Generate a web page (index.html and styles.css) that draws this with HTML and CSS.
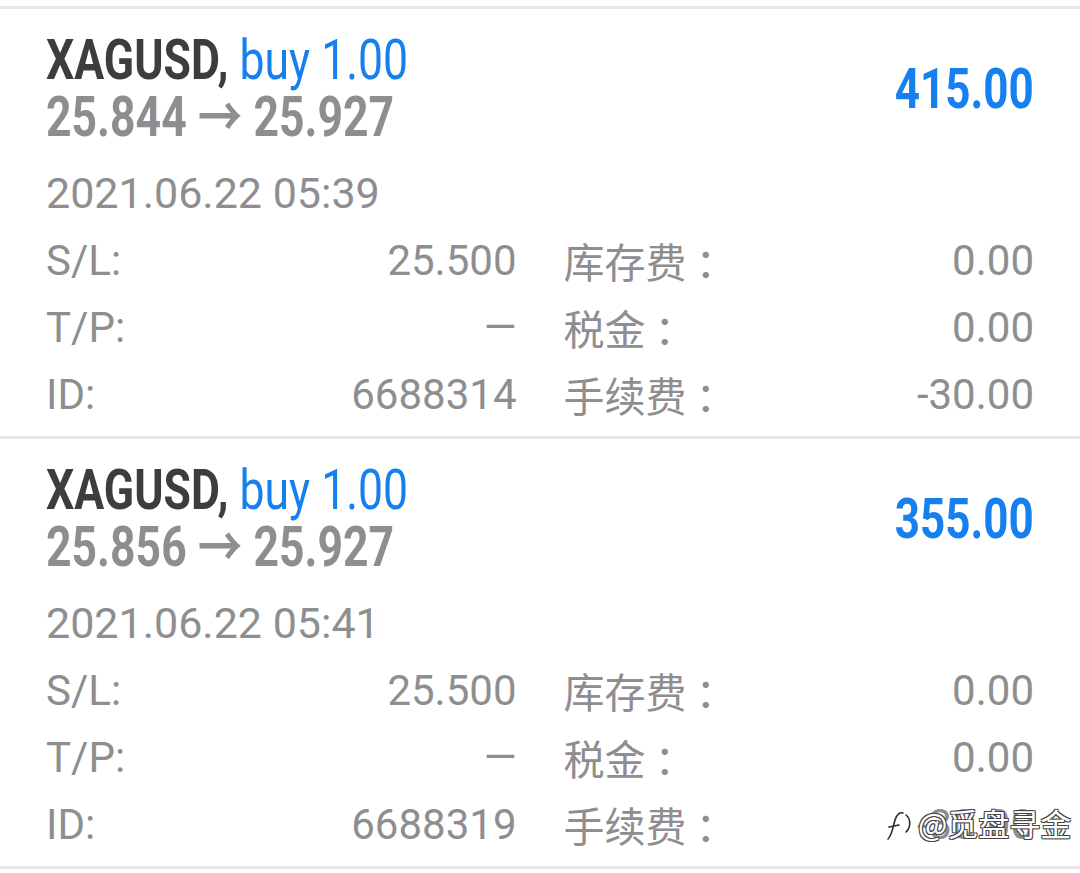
FILE: index.html
```html
<!DOCTYPE html>
<html>

<head>
    <meta charset="UTF-8">
    <meta name="viewport" content="width=device-width, initial-scale=1.0">
    <title>Trade History</title>
    <link rel="stylesheet" href="styles.css">
</head>

<body>
    <div class="list">
        <section class="trade">
            <div class="trade-head">
                <div class="trade-title">
                    <div class="line"><span class="cond"><b class="symbol">XAGUSD,</b> <span class="side">buy 1.00</span></span></div>
                    <div class="line prices"><span class="cond">25.844 → 25.927</span></div>
                </div>
                <div class="profit"><span class="cond">415.00</span></div>
            </div>
            <div class="time">2021.06.22 05:39</div>
            <div class="details">
                <div class="pair"><span>S/L:</span><span>25.500</span></div>
                <div class="pair"><span class="zh">库存费<span class="colon">：</span></span><span>0.00</span></div>
                <div class="pair"><span>T/P:</span><span class="dash">—</span></div>
                <div class="pair"><span class="zh">税金<span class="colon">：</span></span><span>0.00</span></div>
                <div class="pair"><span>ID:</span><span>6688314</span></div>
                <div class="pair"><span class="zh">手续费<span class="colon">：</span></span><span>-30.00</span></div>
            </div>
        </section>

        <section class="trade">
            <div class="trade-head">
                <div class="trade-title">
                    <div class="line"><span class="cond"><b class="symbol">XAGUSD,</b> <span class="side">buy 1.00</span></span></div>
                    <div class="line prices"><span class="cond">25.856 → 25.927</span></div>
                </div>
                <div class="profit"><span class="cond">355.00</span></div>
            </div>
            <div class="time">2021.06.22 05:41</div>
            <div class="details">
                <div class="pair"><span>S/L:</span><span>25.500</span></div>
                <div class="pair"><span class="zh">库存费<span class="colon">：</span></span><span>0.00</span></div>
                <div class="pair"><span>T/P:</span><span class="dash">—</span></div>
                <div class="pair"><span class="zh">税金<span class="colon">：</span></span><span>0.00</span></div>
                <div class="pair"><span>ID:</span><span>6688319</span></div>
                <div class="pair"><span class="zh">手续费<span class="colon">：</span></span><span>-30.00</span></div>
            </div>
        </section>
    </div>

    <div class="watermark">
        <svg class="wm-icon" width="30" height="36" viewBox="0 0 30 36">
            <g fill="none" stroke-linecap="round">
                <path d="M4 34 C8 30 9 22 11 15 C13 9 16 7 19 8 M5 22 L15 20 M22 10 C27 14 27 22 22 27"
                    stroke="#fff" stroke-width="5" />
                <path d="M4 34 C8 30 9 22 11 15 C13 9 16 7 19 8 M5 22 L15 20 M22 10 C27 14 27 22 22 27"
                    stroke="#2b2b2b" stroke-width="1.6" />
            </g>
        </svg>
        <span>@觅盘寻金</span>
    </div>
</body>

</html>
```

FILE: styles.css
```css
body {
    margin: 0;
    padding-top: 6px;
    background-color: #fff;
    font-family: Roboto, 'Noto Sans CJK SC', sans-serif;
    color: #8e8e90;
    position: relative;
}

.list {
    border-top: 3px solid #e7e7e7;
}

.trade {
    border-bottom: 3px solid #e7e7e7;
    padding: 23px 46px 8px 46px;
}

.trade-head {
    display: flex;
    justify-content: space-between;
    align-items: center;
}

.line {
    height: 57px;
    line-height: 57px;
    font-size: 55px;
    white-space: nowrap;
}

/* condensed look: squeeze the glyphs horizontally */
.cond {
    display: inline-block;
    transform: scaleX(0.81);
    transform-origin: left center;
}

.symbol {
    color: #3d3d3d;
    font-weight: 700;
}

.side {
    color: #1681ee;
    font-weight: 400;
}

.prices {
    color: #8e8e92;
    font-weight: 700;
}

.profit {
    color: #1681ee;
    font-size: 55px;
    font-weight: 700;
    line-height: 57px;
}

.profit .cond {
    transform: scaleX(0.8);
    transform-origin: right center;
}

.time {
    margin-top: 14px;
    font-size: 43px;
    line-height: 67px;
}

.details {
    display: grid;
    grid-template-columns: 1fr 1fr;
    column-gap: 47px;
}

.pair {
    display: flex;
    justify-content: space-between;
    font-size: 42px;
    line-height: 67px;
}

.zh {
    font-family: 'Noto Sans CJK SC', sans-serif;
    font-size: 41px;
}

.colon {
    padding-left: 9px;
}

.watermark {
    position: absolute;
    left: 884px;
    top: 800px;
    display: flex;
    align-items: center;
    gap: 4px;
    font-family: 'Noto Sans CJK SC', sans-serif;
    font-size: 31px;
    color: #fff;
    text-shadow: -1px -1px 0 #444, 1px -1px 0 #444, -1px 1px 0 #444, 1px 1px 0 #444;
}
```
